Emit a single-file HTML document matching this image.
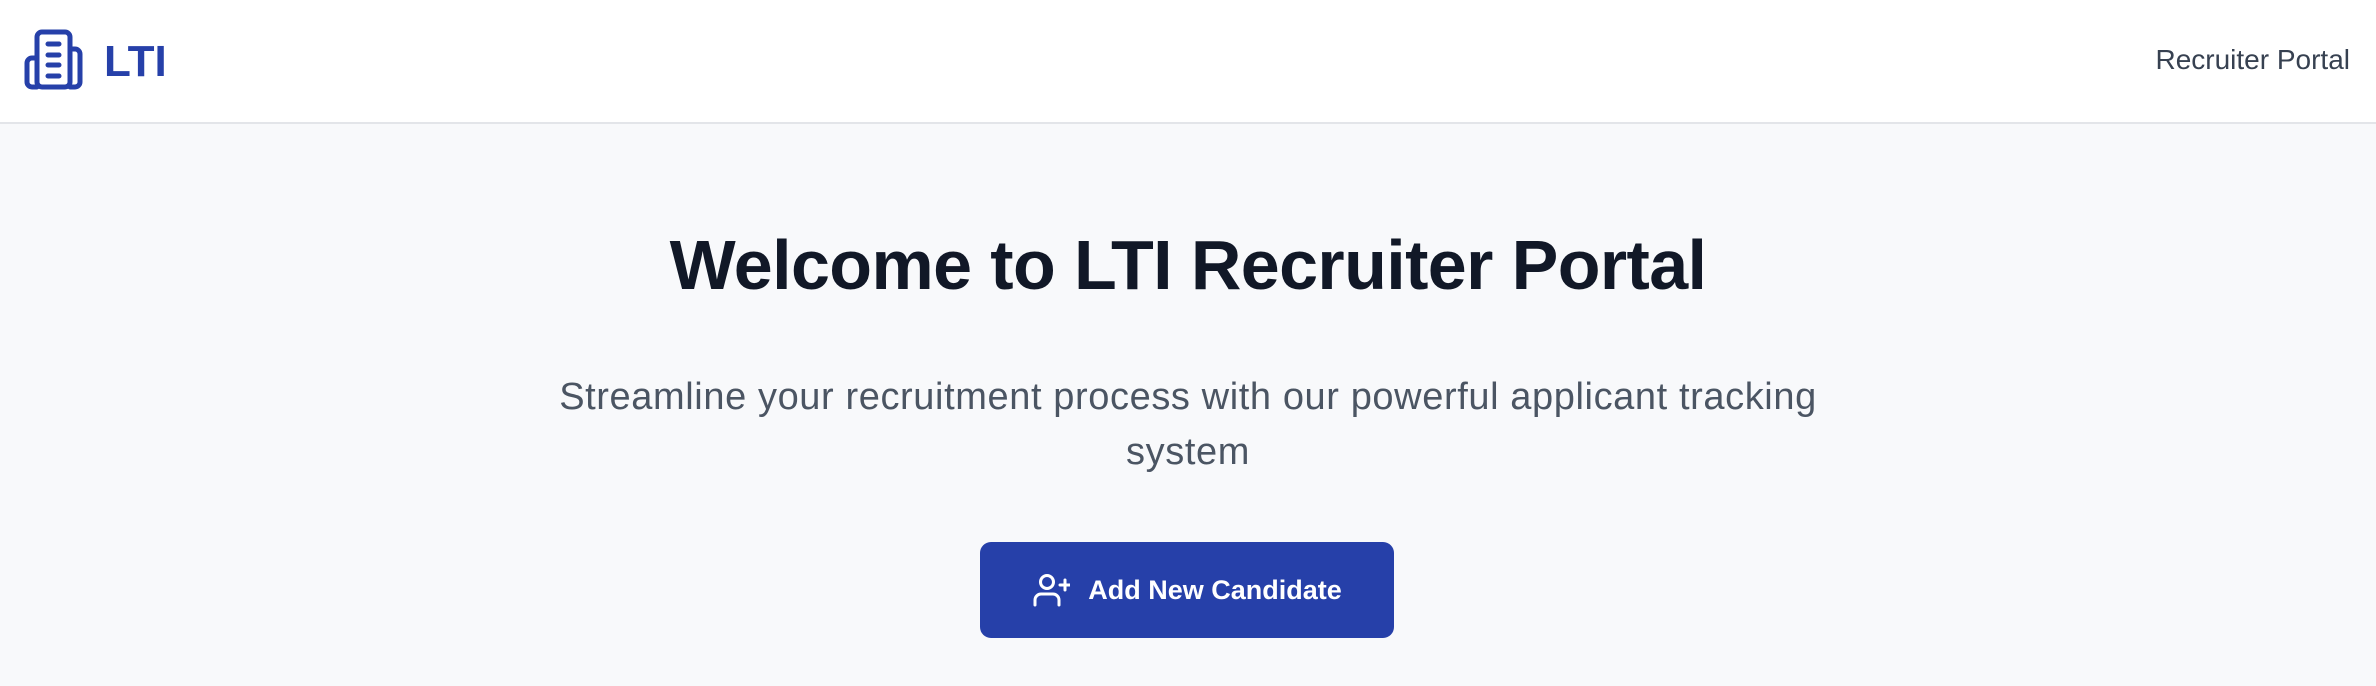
<!DOCTYPE html>
<html><head><style>
*{margin:0;padding:0;box-sizing:border-box}
body{width:2376px;height:686px;background:#f8f9fb;font-family:"Liberation Sans",Arial,sans-serif;position:relative;overflow:hidden}
.hdr{position:absolute;left:0;top:0;width:2376px;height:124px;background:#fff;border-bottom:2px solid #e3e5e9}
.logo{position:absolute;left:24px;top:28px}
.lti{position:absolute;left:104px;top:36px;font-size:44px;font-weight:bold;color:#2640a9;line-height:52px}
.rp{position:absolute;right:26px;top:43px;font-size:28px;color:#374151;line-height:34px}
h1{position:absolute;left:0;width:2376px;top:223px;text-align:center;font-size:70px;font-weight:bold;color:#111827;line-height:84px;letter-spacing:-0.6px}
.sub{position:absolute;left:0;width:2376px;top:370px;text-align:center;font-size:38px;color:#4b5563;line-height:55px;letter-spacing:0.6px}
.btn{position:absolute;left:980px;top:542px;width:414px;height:96px;background:#2640a9;border-radius:11px;color:#fff;font-size:27px;font-weight:bold;display:flex;align-items:center;justify-content:center;gap:18px}
</style></head><body>
<div class="hdr">
<svg class="logo" width="62" height="64" viewBox="0 0 62 64" fill="none" stroke="#2640a9" stroke-width="5" stroke-linecap="round" stroke-linejoin="round">
<rect x="13" y="4" width="33" height="55" rx="5"/>
<path d="M13 30H8a5 5 0 0 0-5 5v19a5 5 0 0 0 5 5h5M46 21h5a5 5 0 0 1 5 5v28a5 5 0 0 1-5 5h-5"/>
<path d="M24 16h11M24 27h11M24 37h11M24 48h11"/>
</svg>
<div class="lti">LTI</div>
<div class="rp">Recruiter Portal</div>
</div>
<h1>Welcome to LTI Recruiter Portal</h1>
<div class="sub">Streamline your recruitment process with our powerful applicant tracking<br>system</div>
<div class="btn"><svg width="38" height="36" viewBox="0 0 38 36" fill="none" stroke="#fff" stroke-width="3" stroke-linecap="round"><circle cx="15" cy="10" r="6.5"/><path d="M3 33v-5a6 6 0 0 1 6-6h12a6 6 0 0 1 6 6v5M33 8v10M28 13h10"/></svg><span>Add New Candidate</span></div>
</body></html>
